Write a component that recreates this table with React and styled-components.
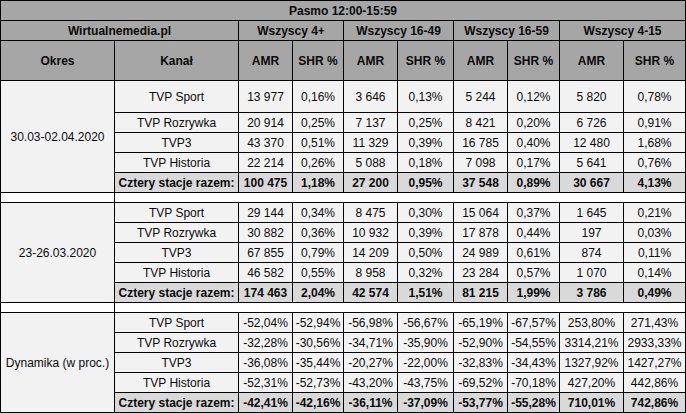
import React from "react";
import styled, { createGlobalStyle } from "styled-components";

const Global = createGlobalStyle`
  html, body { margin: 0; padding: 0; background: #ffffff; }
  body { font-family: "Liberation Sans", Arial, sans-serif; }
`;

const Table = styled.table`
  border-collapse: collapse;
  table-layout: fixed;
  width: 685px;
  font-family: "Liberation Sans", Arial, sans-serif;
  font-size: 12px;
  color: #0a0a0a;
`;

const Row = styled.tr`
  height: ${(p) => p.$h}px;
`;

const Cell = styled.td`
  border: 1px solid #000;
  padding: 0;
  text-align: center;
  vertical-align: middle;
  white-space: nowrap;
  overflow: visible;
  line-height: 14px;
  background: ${(p) => p.$bg || "#f2f2f2"};
  font-weight: ${(p) => (p.$bold ? 700 : 400)};
`;

const HeadCell = styled(Cell).attrs({ as: "th" })`
  background: #a6a6a6;
  font-weight: 700;
`;

const widths = [114, 124, 54, 51, 54, 56, 54, 52, 64, 62];

const groups = ["Wszyscy 4+", "Wszyscy 16-49", "Wszyscy 16-59", "Wszyscy 4-15"];
const channels = ["TVP Sport", "TVP Rozrywka", "TVP3", "TVP Historia"];

const blocks = [
  {
    period: "30.03-02.04.2020",
    firstH: 32,
    rows: [
      ["13 977", "0,16%", "3 646", "0,13%", "5 244", "0,12%", "5 820", "0,78%"],
      ["20 914", "0,25%", "7 137", "0,25%", "8 421", "0,20%", "6 726", "0,91%"],
      ["43 370", "0,51%", "11 329", "0,39%", "16 785", "0,40%", "12 480", "1,68%"],
      ["22 214", "0,26%", "5 088", "0,18%", "7 098", "0,17%", "5 641", "0,76%"],
    ],
    total: ["100 475", "1,18%", "27 200", "0,95%", "37 548", "0,89%", "30 667", "4,13%"],
  },
  {
    period: "23-26.03.2020",
    firstH: 20,
    rows: [
      ["29 144", "0,34%", "8 475", "0,30%", "15 064", "0,37%", "1 645", "0,21%"],
      ["30 882", "0,36%", "10 932", "0,39%", "17 878", "0,44%", "197", "0,03%"],
      ["67 855", "0,79%", "14 209", "0,50%", "24 989", "0,61%", "874", "0,11%"],
      ["46 582", "0,55%", "8 958", "0,32%", "23 284", "0,57%", "1 070", "0,14%"],
    ],
    total: ["174 463", "2,04%", "42 574", "1,51%", "81 215", "1,99%", "3 786", "0,49%"],
  },
  {
    period: "Dynamika (w proc.)",
    firstH: 20,
    rows: [
      ["-52,04%", "-52,94%", "-56,98%", "-56,67%", "-65,19%", "-67,57%", "253,80%", "271,43%"],
      ["-32,28%", "-30,56%", "-34,71%", "-35,90%", "-52,90%", "-54,55%", "3314,21%", "2933,33%"],
      ["-36,08%", "-35,44%", "-20,27%", "-22,00%", "-32,83%", "-34,43%", "1327,92%", "1427,27%"],
      ["-52,31%", "-52,73%", "-43,20%", "-43,75%", "-69,52%", "-70,18%", "427,20%", "442,86%"],
    ],
    total: ["-42,41%", "-42,16%", "-36,11%", "-37,09%", "-53,77%", "-55,28%", "710,01%", "742,86%"],
  },
];

function Block({ block, last }) {
  return (
    <>
      {block.rows.map((vals, i) => (
        <Row key={i} $h={i === 0 ? block.firstH : 20}>
          {i === 0 && <Cell rowSpan={5}>{block.period}</Cell>}
          <Cell>{channels[i]}</Cell>
          {vals.map((v, j) => (
            <Cell key={j}>{v}</Cell>
          ))}
        </Row>
      ))}
      <Row $h={20}>
        <Cell $bg="#d9d9d9" $bold>
          Cztery stacje razem:
        </Cell>
        {block.total.map((v, j) => (
          <Cell key={j} $bg="#d9d9d9" $bold>
            {v}
          </Cell>
        ))}
      </Row>
      {!last && (
        <Row $h={10}>
          <Cell $bg="#ffffff" />
          <Cell $bg="#ffffff" colSpan={9} />
        </Row>
      )}
    </>
  );
}

export default function App() {
  return (
    <>
      <Global />
      <Table>
        <colgroup>
          {widths.map((w, i) => (
            <col key={i} style={{ width: w }} />
          ))}
        </colgroup>
        <thead>
          <Row $h={20}>
            <HeadCell colSpan={10}>Pasmo 12:00-15:59</HeadCell>
          </Row>
          <Row $h={20}>
            <HeadCell colSpan={2}>Wirtualnemedia.pl</HeadCell>
            {groups.map((g) => (
              <HeadCell key={g} colSpan={2}>
                {g}
              </HeadCell>
            ))}
          </Row>
          <Row $h={40}>
            <HeadCell>Okres</HeadCell>
            <HeadCell>Kanał</HeadCell>
            {groups.map((g) => (
              <React.Fragment key={g}>
                <HeadCell>AMR</HeadCell>
                <HeadCell>SHR %</HeadCell>
              </React.Fragment>
            ))}
          </Row>
        </thead>
        <tbody>
          {blocks.map((b, i) => (
            <Block key={i} block={b} last={i === blocks.length - 1} />
          ))}
        </tbody>
      </Table>
    </>
  );
}
